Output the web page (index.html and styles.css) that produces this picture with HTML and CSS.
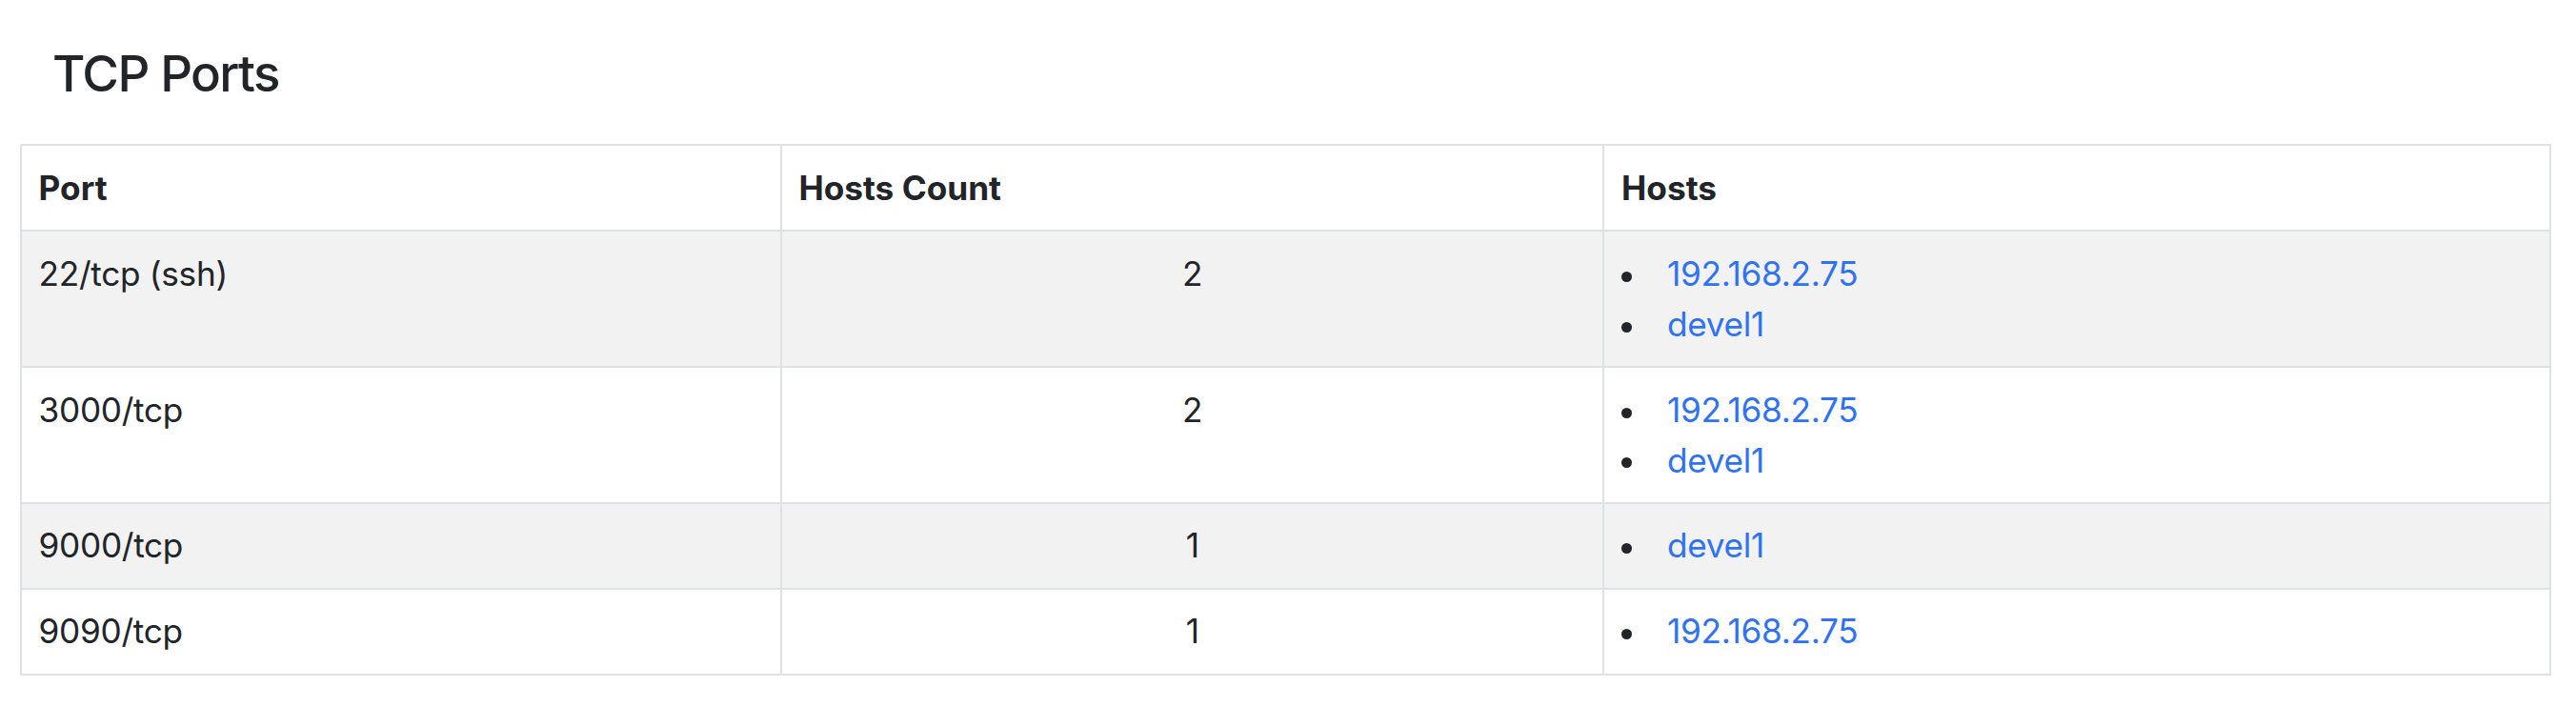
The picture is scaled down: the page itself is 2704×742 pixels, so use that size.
FILE: index.html
```html
<!DOCTYPE html>
<html lang="en">
<head>
<meta charset="utf-8">
<title>TCP Ports</title>
<link rel="stylesheet" href="styles.css">
</head>
<body>
<div class="page">
  <h4 class="title">TCP Ports</h4>
  <table class="ports">
    <colgroup>
      <col class="c-port">
      <col class="c-count">
      <col class="c-hosts">
    </colgroup>
    <thead>
      <tr>
        <th>Port</th>
        <th>Hosts Count</th>
        <th>Hosts</th>
      </tr>
    </thead>
    <tbody>
      <tr class="odd">
        <td>22/tcp (ssh)</td>
        <td class="count">2</td>
        <td><ul class="hosts"><li><a href="#">192.168.2.75</a></li><li><a href="#">devel1</a></li></ul></td>
      </tr>
      <tr>
        <td>3000/tcp</td>
        <td class="count">2</td>
        <td><ul class="hosts"><li><a href="#">192.168.2.75</a></li><li><a href="#">devel1</a></li></ul></td>
      </tr>
      <tr class="odd">
        <td>9000/tcp</td>
        <td class="count">1</td>
        <td><ul class="hosts"><li><a href="#">devel1</a></li></ul></td>
      </tr>
      <tr>
        <td>9090/tcp</td>
        <td class="count">1</td>
        <td><ul class="hosts"><li><a href="#">192.168.2.75</a></li></ul></td>
      </tr>
    </tbody>
  </table>
</div>
</body>
</html>
```
FILE: styles.css
```css
html, body {
  margin: 0;
  padding: 0;
  background: #ffffff;
}
body {
  font-family: Inter, "Liberation Sans", sans-serif;
  font-size: 35.2px;
  line-height: 1.5;
  color: #212529;
}
.page {
  padding: 0 26px 0 21px;
}
.title {
  margin: 46px 0 42px 34px;
  font-size: 52.8px;
  font-weight: 500;
  line-height: 1.2;
  letter-spacing: -1.6px;
}
.ports {
  width: 100%;
  border-collapse: collapse;
  table-layout: fixed;
}
.c-port { width: 30.05%; }
.c-count { width: 32.53%; }
.c-hosts { width: 37.42%; }
.ports th,
.ports td {
  border: 2px solid #dee2e6;
  padding: 17.6px;
  text-align: left;
  vertical-align: top;
  line-height: 52.8px;
}
.ports td {
  letter-spacing: -0.3px;
}
.ports th {
  font-weight: 700;
}
.ports tr.odd td {
  background: #f2f2f2;
}
.ports td.count {
  text-align: center;
}
.hosts {
  margin: 0;
  padding: 0;
  list-style: none;
}
.hosts li::before {
  content: "";
  display: inline-block;
  width: 11px;
  height: 11px;
  margin-right: 37px;
  border-radius: 50%;
  background: #212529;
  vertical-align: middle;
}
.hosts a {
  color: #2f72f3;
  text-decoration: none;
}
```
